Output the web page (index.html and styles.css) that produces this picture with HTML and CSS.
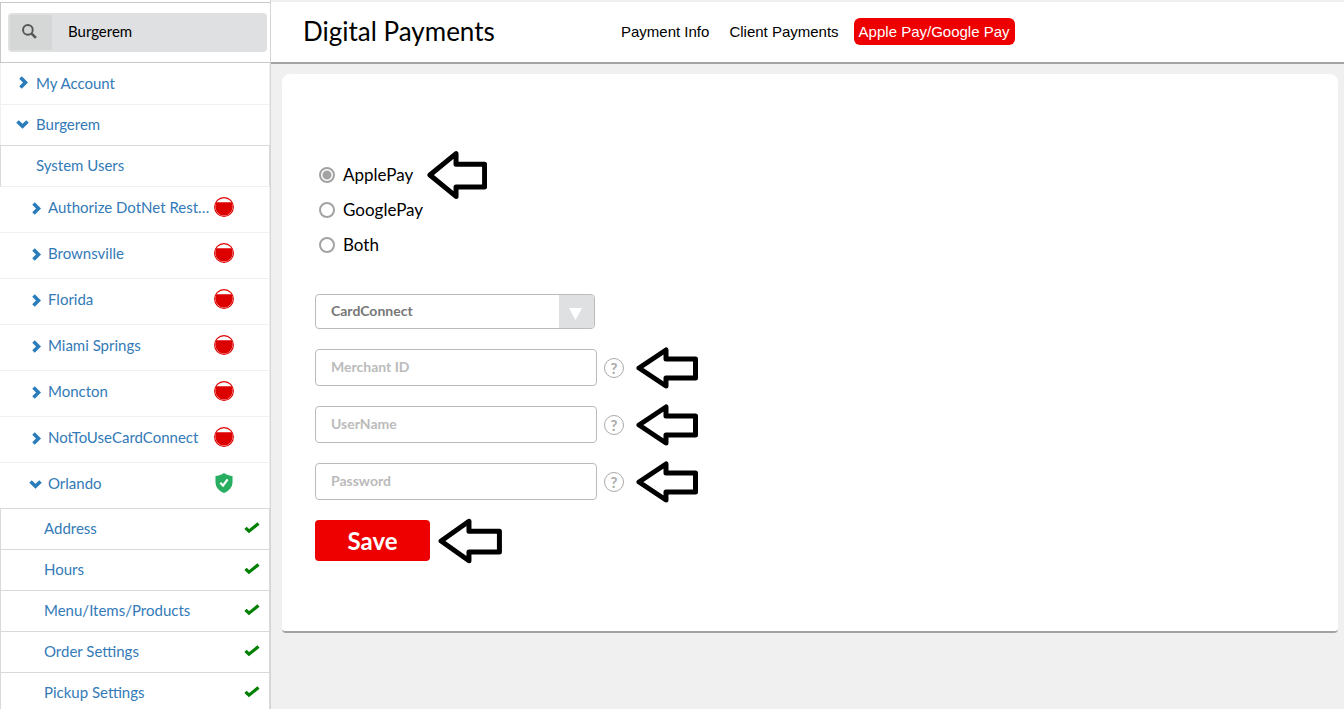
FILE: index.html
```html
<!DOCTYPE html>
<html lang="en">

<head>
	<meta charset="utf-8">
	<meta name="viewport" content="width=device-width, initial-scale=1" />
	<title>Digital Payments</title>
	<link rel="stylesheet" href="styles.css">
</head>

<body>
	<!-- shared icons -->
	<svg class="sprite" aria-hidden="true">
		<symbol id="chev-right" viewBox="0 0 9 13"><path d="M1.5 1.5L6.5 6.5L1.5 11.5" fill="none" stroke="currentColor" stroke-width="3.6" /></symbol>
		<symbol id="chev-down" viewBox="0 0 13 9"><path d="M1.5 1.5L6.5 6.2L11.5 1.5" fill="none" stroke="currentColor" stroke-width="3.6" /></symbol>
		<symbol id="stop" viewBox="0 0 20 20">
			<circle cx="10" cy="10" r="9.4" fill="#fff" stroke="#d00" stroke-width="1.1" />
			<path d="M2.3 5.2H17.7A9 9 0 0 1 18.6 10A8.6 8.6 0 0 1 1.4 10A9 9 0 0 1 2.3 5.2Z" fill="#d00" />
		</symbol>
		<symbol id="shield" viewBox="0 0 18 20">
			<path d="M9 0C6.5 1.7 3.5 2.7 .5 3V9C.5 14.5 4 18 9 20C14 18 17.5 14.5 17.5 9V3C14.5 2.7 11.5 1.7 9 0Z" fill="#27ae60" />
			<path d="M5.3 9.8L8 12.6L12.6 6.3" fill="none" stroke="#fff" stroke-width="2.2" />
		</symbol>
		<symbol id="check" viewBox="0 0 16 12"><path d="M1.5 5.8L5 9.2L14.5 1.5" fill="none" stroke="#008000" stroke-width="3.2" /></symbol>
		<symbol id="arrow" viewBox="0 0 62 42" preserveAspectRatio="none"><path d="M3 21L30 3V12H59.5V31H30V39Z" fill="#fff" stroke="#000" stroke-width="5" stroke-linejoin="round" vector-effect="non-scaling-stroke" /></symbol>
	</svg>

	<div class="layout">
		<aside class="sidebar">
			<div class="search">
				<div class="search-box">
					<label class="search-icon" for="search" aria-label="Search">
						<svg width="15" height="15" viewBox="0 0 14 14"><circle cx="5.5" cy="5.5" r="4.5" fill="none" stroke="#555" stroke-width="1.8" /><path d="M8.7 8.7L13 13" stroke="#555" stroke-width="2.4" /></svg>
					</label>
					<input id="search" type="text" value="Burgerem" />
				</div>
			</div>
			<nav class="tree">
				<a class="row top" href="#"><svg class="chev"><use href="#chev-right" /></svg><span>My Account</span></a>
				<a class="row top" href="#"><svg class="chev down"><use href="#chev-down" /></svg><span>Burgerem</span></a>
				<a class="row top users" href="#"><span>System Users</span></a>
				<a class="row store" href="#"><svg class="chev"><use href="#chev-right" /></svg><span>Authorize DotNet Rest…</span><svg class="status"><use href="#stop" /></svg></a>
				<a class="row store" href="#"><svg class="chev"><use href="#chev-right" /></svg><span>Brownsville</span><svg class="status"><use href="#stop" /></svg></a>
				<a class="row store" href="#"><svg class="chev"><use href="#chev-right" /></svg><span>Florida</span><svg class="status"><use href="#stop" /></svg></a>
				<a class="row store" href="#"><svg class="chev"><use href="#chev-right" /></svg><span>Miami Springs</span><svg class="status"><use href="#stop" /></svg></a>
				<a class="row store" href="#"><svg class="chev"><use href="#chev-right" /></svg><span>Moncton</span><svg class="status"><use href="#stop" /></svg></a>
				<a class="row store" href="#"><svg class="chev"><use href="#chev-right" /></svg><span>NotToUseCardConnect</span><svg class="status"><use href="#stop" /></svg></a>
				<a class="row store" href="#"><svg class="chev down"><use href="#chev-down" /></svg><span>Orlando</span><svg class="status"><use href="#shield" /></svg></a>
				<a class="row page" href="#"><span>Address</span><svg class="check"><use href="#check" /></svg></a>
				<a class="row page" href="#"><span>Hours</span><svg class="check"><use href="#check" /></svg></a>
				<a class="row page" href="#"><span>Menu/Items/Products</span><svg class="check"><use href="#check" /></svg></a>
				<a class="row page" href="#"><span>Order Settings</span><svg class="check"><use href="#check" /></svg></a>
				<a class="row page" href="#"><span>Pickup Settings</span><svg class="check"><use href="#check" /></svg></a>
			</nav>
		</aside>

		<main class="main">
			<header class="header">
				<h1>Digital Payments</h1>
				<nav class="tabs">
					<a href="#">Payment Info</a>
					<a href="#">Client Payments</a>
					<a class="active" href="#">Apple Pay/Google Pay</a>
				</nav>
			</header>

			<form class="card" onsubmit="return false">
				<div class="radios">
					<div class="line">
						<label><input type="radio" name="wallet" checked />ApplePay</label>
						<svg class="arrow tall"><use href="#arrow" /></svg>
					</div>
					<div class="line"><label><input type="radio" name="wallet" />GooglePay</label></div>
					<div class="line"><label><input type="radio" name="wallet" />Both</label></div>
				</div>
				<div class="select">
					<select aria-label="Processor">
						<option>CardConnect</option>
					</select>
					<span class="drop"><svg width="13" height="12" viewBox="0 0 13 12"><path d="M0 0H13L6.5 12Z" fill="#fff" /></svg></span>
				</div>
				<div class="field">
					<input type="text" placeholder="Merchant ID" aria-label="Merchant ID" />
					<button class="help" type="button">?</button>
					<svg class="arrow"><use href="#arrow" /></svg>
				</div>
				<div class="field">
					<input type="text" placeholder="UserName" aria-label="UserName" />
					<button class="help" type="button">?</button>
					<svg class="arrow"><use href="#arrow" /></svg>
				</div>
				<div class="field">
					<input type="password" placeholder="Password" aria-label="Password" />
					<button class="help" type="button">?</button>
					<svg class="arrow"><use href="#arrow" /></svg>
				</div>
				<div class="actions">
					<button class="save" type="submit">Save</button>
					<svg class="arrow"><use href="#arrow" /></svg>
				</div>
			</form>
		</main>
	</div>
</body>

</html>
```

FILE: styles.css
```css
* {
	box-sizing:border-box;
}

body {
	margin:0;
	background-color:#f0f0f0;
	font-family:Lato, sans-serif;
	color:#000;
}

a {
	text-decoration:none;
}

svg {
	flex:none;
}

.sprite {
	position:absolute;
	width:0;
	height:0;
}

.layout {
	display:flex;
	height:100vh;
	overflow:hidden;
}

/* sidebar */
.sidebar {
	flex:none;
	width:271px;
	padding-top:2px;
	overflow:hidden;
	background-color:#fff;
	border-right:1px solid #d5d5d5;
}

.search {
	padding:10px 3px 10px 7px;
	border:1px solid #c8c8c8;
	border-right:0;
}

.search-box {
	display:flex;
	height:39px;
	padding:2px;
	border-radius:4px;
	background-color:#dfe0e2;
}

.search-icon {
	display:flex;
	align-items:center;
	justify-content:center;
	width:42px;
	padding:0 4px 2px 0;
	background-color:#d5d7d7;
}

.search-box input {
	flex:1;
	min-width:0;
	padding:0 16px 3px;
	border:0;
	background:none;
	font-family:Lato, sans-serif;
	font-size:15px;
}

.tree {
	font-size:15px;
	line-height:20px;
}

.row {
	display:flex;
	align-items:center;
	height:41px;
	padding-bottom:2px;
	border:1px solid #f0f0f0;
	border-width:0 1px 1px;
	color:#337ab7;
}

.row span {
	overflow:hidden;
	text-overflow:ellipsis;
	white-space:nowrap;
}

.chev {
	width:9px;
	height:13px;
	color:#2a7dba;
}

.chev.down {
	width:13px;
	height:9px;
}

.top {
	padding-left:18px;
}

.top:first-child {
	height:42px;
}

.top .chev {
	margin-right:8px;
}

.top .chev.down {
	margin-left:-3px;
	margin-right:7px;
}

.users {
	height:42px;
	margin-top:-1px;
	padding-left:35px;
	border-color:#d9d9d9;
	border-bottom-color:#f0f0f0;
	border-top-width:1px;
}

.store {
	height:46px;
	padding:0 35px 6px 32px;
	border-left:0;
}

.store span {
	flex:1;
	margin-right:4px;
}

.store .chev {
	margin:4px 7px 0 0;
}

.store .chev.down {
	margin-left:-3px;
	margin-right:6px;
}

.status {
	width:20px;
	height:20px;
}

.page {
	height:42px;
	margin-top:-1px;
	padding:0 9px 2px 43px;
	border-color:#d9d9d9;
	border-top-width:1px;
}

.page span {
	flex:1;
}

.check {
	width:16px;
	height:12px;
}

/* content */
.main {
	flex:1;
	min-width:0;
	padding-top:1px;
}

.header {
	display:flex;
	align-items:center;
	height:63px;
	padding:0 0 2px 32px;
	background-color:#fff;
	border-top:1px solid #eee;
	border-bottom:2px solid #a3a3a3;
}

.header h1 {
	width:313px;
	margin:0;
	font-size:26px;
	font-weight:400;
	white-space:nowrap;
}

.tabs {
	display:flex;
	gap:10px;
	font-family:"Liberation Sans", Arial, sans-serif;
	font-size:15px;
	line-height:17px;
	white-space:nowrap;
}

.tabs a {
	padding:5px;
	border-radius:6px;
	color:#000;
}

.tabs .active {
	background-color:#e00;
	color:#fff;
}

.card {
	margin:10px 6px 0 11px;
	padding:83px 33px 70px;
	border-bottom:2px solid #a3a3a3;
	border-radius:8px 8px 4px 4px;
	background-color:#fff;
}

.line {
	display:flex;
	align-items:center;
	height:35px;
}

.radios label {
	display:flex;
	align-items:center;
	font-size:17px;
}

.radios input {
	appearance:none;
	width:16px;
	height:16px;
	margin:0 8px 0 4px;
	border:2px solid #a3a3a3;
	border-radius:50%;
}

.radios input:checked {
	background:radial-gradient(circle, #a3a3a3 4px, #fff 5px);
}

.select {
	position:relative;
	width:280px;
	height:35px;
	margin:32px 0 20px;
}

.select select {
	appearance:none;
	width:100%;
	height:100%;
	padding:0 15px 2px;
	border:1px solid #bbb;
	border-radius:4px;
	background-color:#fff;
	color:#777;
	font:700 14px Lato, sans-serif;
}

.drop {
	position:absolute;
	top:1px;
	right:1px;
	bottom:1px;
	width:35px;
	padding:13px 0 0 10px;
	border-radius:0 3px 3px 0;
	background-color:#dfe0e2;
	pointer-events:none;
}

.drop svg {
	display:block;
}

.field {
	display:flex;
	align-items:center;
	height:37px;
	margin-bottom:20px;
}

.field input {
	width:282px;
	height:37px;
	padding:0 15px 2px;
	border:1px solid #bbb;
	border-radius:4px;
	font:700 14px Lato, sans-serif;
}

.field input::placeholder {
	color:#bbb;
}

.help {
	width:20px;
	height:20px;
	margin-left:7px;
	padding:0;
	border:1px solid #aaa;
	border-radius:50%;
	background:none;
	color:#aaa;
	font:700 15px/16px Lato, sans-serif;
}

.arrow {
	width:62px;
	height:42px;
	margin-left:12px;
}

.arrow.tall {
	width:60px;
	height:50px;
	margin-left:14px;
}

.actions {
	display:flex;
	align-items:center;
	height:41px;
}

.actions .arrow {
	width:64px;
	height:46px;
	margin-left:8px;
}

.save {
	width:115px;
	height:41px;
	border:0;
	border-radius:4px;
	background-color:#e00;
	color:#fff;
	font:700 24px Lato, sans-serif;
}
```
